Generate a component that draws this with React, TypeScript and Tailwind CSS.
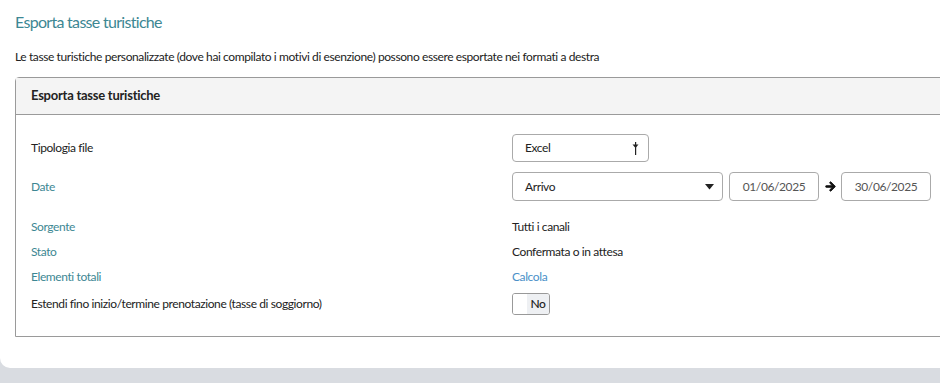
import React from "react";

const font = { fontFamily: "'Lato', 'Roboto', sans-serif" };

function Caret() {
  return (
    <svg width="9" height="6" viewBox="0 0 9 6" className="block">
      <path d="M0 0 H9 L4.5 5.5 Z" fill="#222" />
    </svg>
  );
}

function SortIcon() {
  return (
    <svg width="7" height="13" viewBox="0 0 7 13" className="block">
      <path d="M0.5 2.5 H6.5 L3.5 6 Z" fill="#222" />
      <rect x="3" y="0" width="1.2" height="13" fill="#222" />
    </svg>
  );
}

function Arrow() {
  return (
    <svg width="11" height="11" viewBox="0 0 448 512" className="block">
      <path
        fill="#111"
        stroke="#111"
        strokeWidth="40"
        d="M190.5 66.9l22.2-22.2c9.4-9.4 24.6-9.4 33.9 0L441 239c9.4 9.4 9.4 24.6 0 33.9L246.6 467.3c-9.4 9.4-24.6 9.4-33.9 0l-22.2-22.2c-9.5-9.5-9.3-25 .4-34.3L311.4 296H24c-13.3 0-24-10.7-24-24v-32c0-13.3 10.7-24 24-24h287.4L190.9 101.2c-9.8-9.3-10-24.8-.4-34.3z"
      />
    </svg>
  );
}

export default function App() {
  return (
    <div className="w-[940px] h-[383px] bg-[#d9dce1] overflow-hidden tracking-[-0.4px]" style={font}>
      <div className="bg-white h-[368px] rounded-bl-[10px] pl-[15px] pt-[11px]">
        <h1 className="text-[16px] leading-[22px] tracking-[-0.7px] text-[#3d8793]">Esporta tasse turistiche</h1>
        <p className="mt-[16px] text-[12px] leading-[16px] text-[#222]">
          Le tasse turistiche personalizzate (dove hai compilato i motivi di esenzione) possono essere esportate nei formati a destra
        </p>
        <div className="mt-[12px] w-[940px] border border-[#9a9a9a] rounded-tl-[4px] h-[260px]">
          <div className="h-[37px] bg-[#f4f4f4] border-b border-[#9a9a9a] flex items-center pl-[15px]">
            <span className="text-[13px] font-bold tracking-[-0.25px] text-[#222]">Esporta tasse turistiche</span>
          </div>
          <div className="pl-[15px] pt-[19px] text-[12px] text-[#222]">
            <div className="flex items-center h-[28px]">
              <div className="w-[481px]">Tipologia file</div>
              <div className="w-[137px] h-[28px] border border-[#aaa] rounded-[4px] flex items-center justify-between pl-[12px] pr-[9px]">
                <span>Excel</span>
                <SortIcon />
              </div>
            </div>
            <div className="flex items-center h-[29px] mt-[10px]">
              <div className="w-[481px] text-[#3d8793]">Date</div>
              <div className="w-[211px] h-[29px] border border-[#aaa] rounded-[4px] flex items-center justify-between pl-[12px] pr-[8px]">
                <span>Arrivo</span>
                <Caret />
              </div>
              <div className="ml-[6px] w-[90px] h-[29px] border border-[#aaa] rounded-[4px] flex items-center justify-center text-[#555]">
                01/06/2025
              </div>
              <div className="w-[22px] flex justify-center">
                <Arrow />
              </div>
              <div className="w-[90px] h-[29px] border border-[#aaa] rounded-[4px] flex items-center justify-center text-[#555]">
                30/06/2025
              </div>
            </div>
            <div className="flex items-center h-[25px] mt-[13px]">
              <div className="w-[481px] text-[#3d8793]">Sorgente</div>
              <div>Tutti i canali</div>
            </div>
            <div className="flex items-center h-[25px]">
              <div className="w-[481px] text-[#3d8793]">Stato</div>
              <div>Confermata o in attesa</div>
            </div>
            <div className="flex items-center h-[25px]">
              <div className="w-[481px] text-[#3d8793]">Elementi totali</div>
              <div className="text-[#4a90c8]">Calcola</div>
            </div>
            <div className="flex items-center h-[22px] mt-[4px]">
              <div className="w-[481px]">Estendi fino inizio/termine prenotazione (tasse di soggiorno)</div>
              <div className="w-[38px] h-[22px] border border-[#999] rounded-[3px] flex overflow-hidden">
                <div className="w-[14px] bg-white" />
                <div className="flex-1 bg-[#eef0f3] flex items-center justify-center font-medium text-[12px]">No</div>
              </div>
            </div>
          </div>
        </div>
      </div>
    </div>
  );
}
